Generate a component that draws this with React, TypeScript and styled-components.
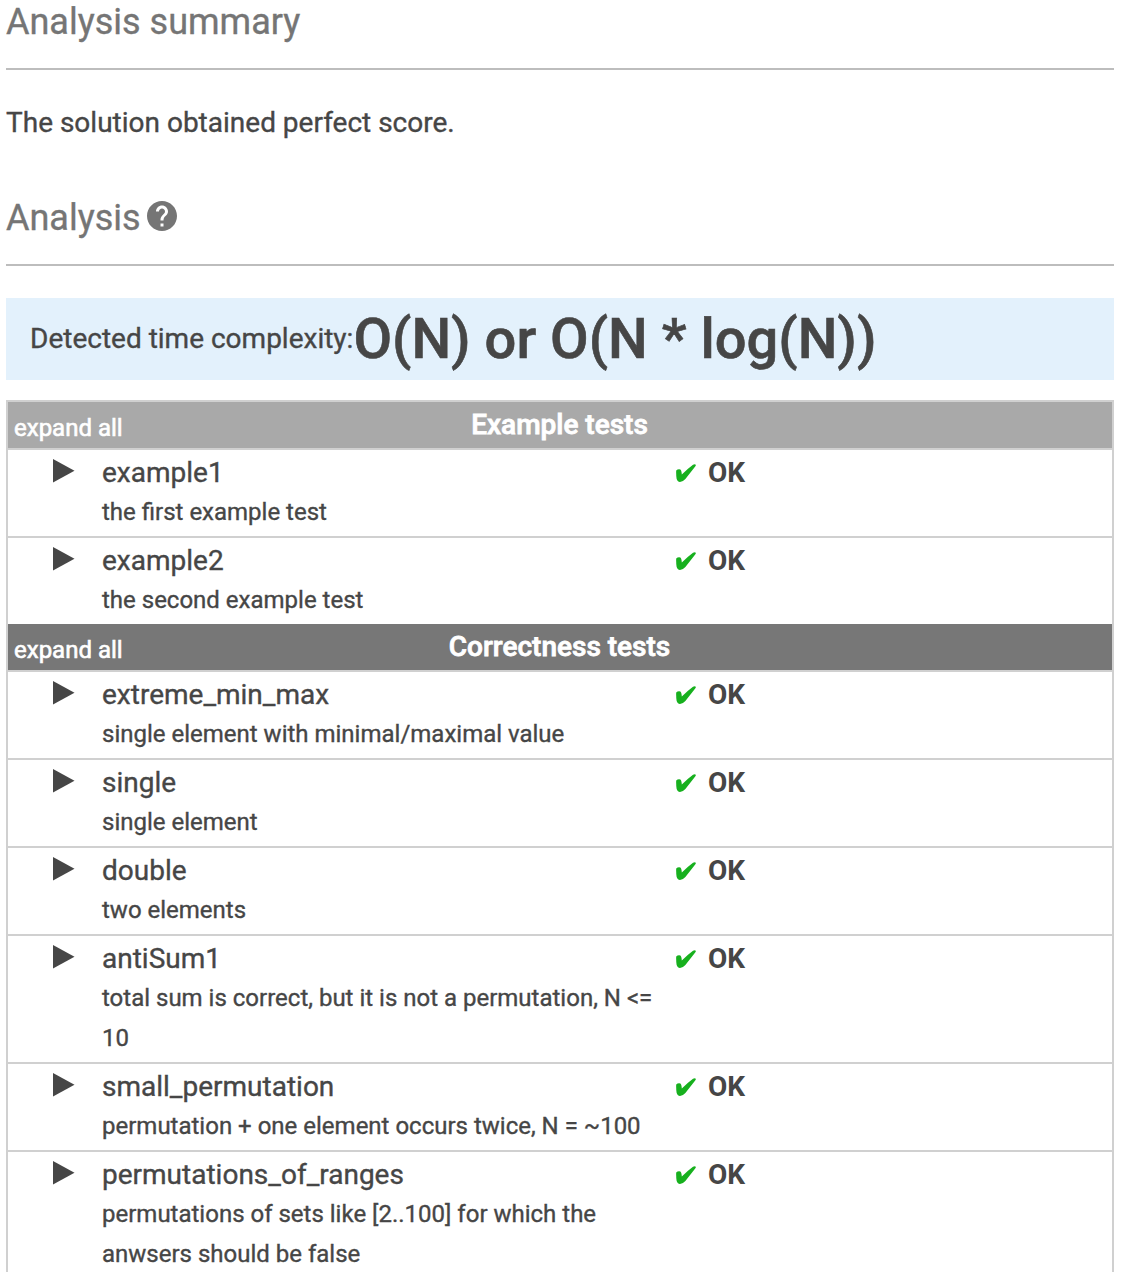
import React from "react";
import styled, { createGlobalStyle } from "styled-components";

const GlobalStyle = createGlobalStyle`
  * { box-sizing: border-box; }
  html, body { margin: 0; background: #fff; }
  body {
    font-family: Roboto, "Liberation Sans", sans-serif;
    color: #464646;
    overflow: hidden;
    -webkit-text-stroke: 0.35px currentColor;
  }
  svg { display: block; flex: none; }
`;
const Page = styled.main`
  height: 1272px;
  overflow: hidden;
  padding: 0 8px 0 6px;
`;
const Heading = styled.h2<{ $height: number }>`
  margin: 0;
  height: ${(p) => p.$height}px;
  display: flex;
  align-items: flex-end;
  gap: 6px;
  padding-bottom: 24px;
  border-bottom: 2px solid #bdbdbd;
  font-size: 36px;
  font-weight: 400;
  line-height: 44px;
  color: #757575;
`;
const HelpIcon = styled.svg`
  width: 30px;
  height: 30px;
  margin-bottom: 9px;
`;
const Summary = styled.p`
  margin: 0;
  padding: 33px 0 31px;
  font-size: 28px;
  line-height: 40px;
`;
const Complexity = styled.div`
  margin: 32px 0 20px;
  height: 82px;
  padding-left: 24px;
  display: flex;
  align-items: center;
  background: #e3f1fc;
  font-size: 28px;
  white-space: nowrap;
`;
const ComplexityLabel = styled.span`
  padding-bottom: 2px;
`;
const BigO = styled.strong`
  font-size: 56px;
  font-weight: 500;
  line-height: 80px;
  -webkit-text-stroke-width: 0.6px;
`;
const Table = styled.section`
  border: 2px solid #d0d0d0;
  border-bottom: 0;
`;
const GroupBar = styled.header<{ $tone: string }>`
  display: grid;
  grid-template-columns: 1fr auto 1fr;
  height: 46px;
  padding: 0 7px 0 6px;
  background: ${(p) => p.$tone};
  color: #fff;
`;
const ExpandAll = styled.span`
  font-size: 24px;
  line-height: 52px;
  -webkit-text-stroke-width: 0.6px;
`;
const GroupTitle = styled.h3`
  margin: 0;
  font-size: 28px;
  font-weight: 500;
  line-height: 45px;
  -webkit-text-stroke-width: 0.8px;
`;
const Row = styled.article`
  display: grid;
  grid-template-columns: 94px 573px 1fr;
  border-top: 2px solid #d0d0d0;
  padding: 3px 0 4px;
`;
const Toggle = styled.svg`
  width: 22px;
  height: 24px;
  margin: 6px 0 0 45px;
`;
const Name = styled.div`
  font-size: 28px;
  line-height: 40px;
`;
const Description = styled.div`
  font-size: 24px;
  line-height: 40px;
  max-width: 556px;
  &:nth-child(2) { margin-top: -1px; }
`;
const Result = styled.div`
  display: flex;
  gap: 12px;
  height: 40px;
  font-size: 28px;
  font-weight: 700;
  line-height: 40px;
  -webkit-text-stroke-width: 0;
`;
const Check = styled.svg`
  width: 21px;
  height: 18px;
  margin: 11px 0 0 0;
`;

interface Test { name: string; lines: string[] }
interface Group { title: string; tone: string; tests: Test[] }

const groups: Group[] = [
  { title: "Example tests", tone: "#a9a9a9", tests: [
    { name: "example1", lines: ["the first example test"] },
    { name: "example2", lines: ["the second example test"] },
  ] },
  { title: "Correctness tests", tone: "#777", tests: [
    { name: "extreme_min_max", lines: ["single element with minimal/maximal value"] },
    { name: "single", lines: ["single element"] },
    { name: "double", lines: ["two elements"] },
    { name: "antiSum1", lines: ["total sum is correct, but it is not a permutation, N <=", "10"] },
    { name: "small_permutation", lines: ["permutation + one element occurs twice, N = ~100"] },
    { name: "permutations_of_ranges", lines: ["permutations of sets like [2..100] for which the", "anwsers should be false"] },
  ] },
];

function TestRow({ test }: { test: Test }) {
  return (
    <Row>
      <Toggle viewBox="0 0 22 24"><path d="M0 0L21.5 11.8L0 23.6Z" fill="#464646" /></Toggle>
      <div>
        <Name>{test.name}</Name>
        {test.lines.map((line) => <Description key={line}>{line}</Description>)}
      </div>
      <Result>
        <Check viewBox="0 0 21 18"><path d="M1.2 6.6Q3 4.7 5.4 5.5Q6.6 6.4 6.8 10.6Q12.8 4.6 18 .8Q19.8-.3 20.8.7Q21.1 1.7 19.8 3.1L10.4 15Q7.8 17.9 5 17.9Q2.3 17.9 1.6 14.8Q1 11 1.2 6.6Z" fill="#17b01e" /></Check>
        <span>OK</span>
      </Result>
    </Row>
  );
}

export default function App() {
  return (
    <>
      <GlobalStyle />
      <Page>
        <Heading $height={70}>Analysis summary</Heading>
        <Summary>The solution obtained perfect score.</Summary>
        <Heading $height={92}>
          <span>Analysis</span>
          <HelpIcon viewBox="2 2 20 20"><path fill="#757575" d="M12 2C6.48 2 2 6.48 2 12s4.48 10 10 10 10-4.48 10-10S17.52 2 12 2zm1 17h-2v-2h2v2zm2.07-7.75l-.9.92C13.45 12.9 13 13.5 13 15h-2v-.5c0-1.1.45-2.1 1.17-2.83l1.24-1.26c.37-.36.59-.86.59-1.41 0-1.1-.9-2-2-2s-2 .9-2 2H8c0-2.21 1.79-4 4-4s4 1.79 4 4c0 .88-.36 1.68-.93 2.25z" /></HelpIcon>
        </Heading>
        <Complexity><ComplexityLabel>Detected time complexity:</ComplexityLabel><BigO>O(N) or O(N * log(N))</BigO></Complexity>
        <Table>
          {groups.map((group) => (
            <React.Fragment key={group.title}>
              <GroupBar $tone={group.tone}>
                <ExpandAll>expand all</ExpandAll>
                <GroupTitle>{group.title}</GroupTitle>
              </GroupBar>
              {group.tests.map((test) => <TestRow key={test.name} test={test} />)}
            </React.Fragment>
          ))}
        </Table>
      </Page>
    </>
  );
}
